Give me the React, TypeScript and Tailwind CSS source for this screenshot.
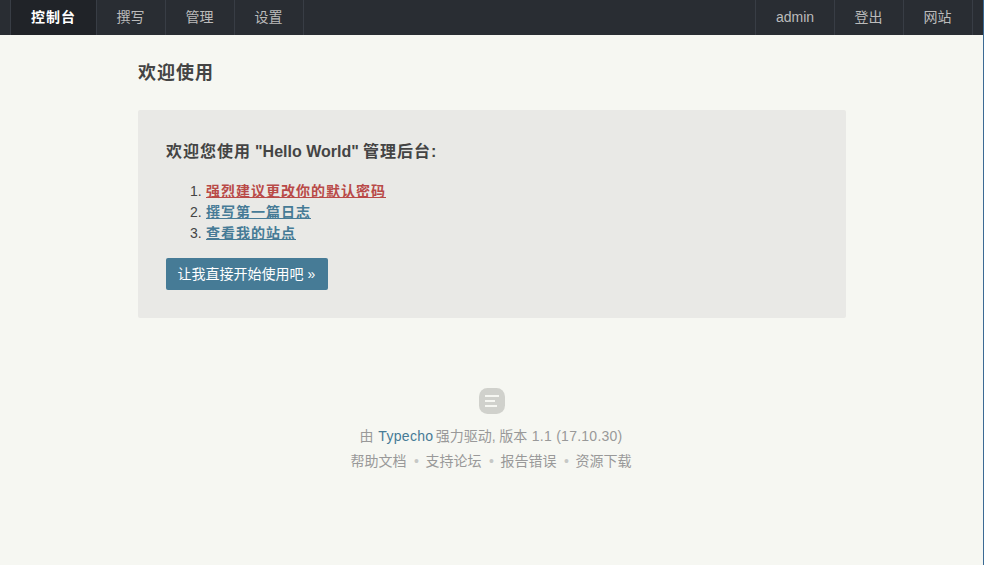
import React from "react";

const navLink = "flex h-[35px] items-center border-r border-[#383d45] text-[#bbb]";

const steps = [
  { label: "强烈建议更改你的默认密码", color: "text-[#b94a48]" },
  { label: "撰写第一篇日志", color: "text-[#467b96]" },
  { label: "查看我的站点", color: "text-[#467b96]" },
];

const resources = ["帮助文档", "支持论坛", "报告错误", "资源下载"];

function Logo() {
  return (
    <svg width="26" height="26" viewBox="0 0 26 26" className="ml-[2px] block">
      <rect width="26" height="26" rx="8.5" fill="#d0d1cc" />
      <path d="M6 7h14v2H6zM6 12h10v2H6zM6 17h12v2H6z" fill="#f6f7f2" />
    </svg>
  );
}

export default function App() {
  return (
    <div className="h-[565px] w-[984px] overflow-hidden border-r border-[#3b6a94] bg-[#f6f7f2] font-['Liberation_Sans','Noto_Sans_CJK_SC',sans-serif] text-[14px] leading-[21px] text-[#444]">
      <nav className="flex h-[35px] justify-between bg-[#292d33] px-[10px]">
        <div className="flex border-l border-[#383d45]">
          <a className="flex h-[35px] w-[86px] items-center border-r border-[#383d45] bg-[#202328] pl-5 font-bold tracking-[1px] text-white">
            <span>控制台</span>
          </a>
          {["撰写", "管理", "设置"].map((t) => (
            <a key={t} className={navLink + " w-[69px] pl-[19.5px]"}>
              <span>{t}</span>
            </a>
          ))}
        </div>
        <div className="flex border-l border-[#383d45]">
          <a className={navLink + " w-[79px] pl-5"}>
            <span>admin</span>
          </a>
          {["登出", "网站"].map((t) => (
            <a key={t} className={navLink + " w-[69px] pl-[19.5px]"}>
              <span>{t}</span>
            </a>
          ))}
        </div>
      </nav>

      <main className="ml-[138px] w-[708px] pt-[26px]">
        <h2 className="h-[49px] text-[18px] font-bold leading-[24px] tracking-[1px]">欢迎使用</h2>
        <section className="h-[208px] rounded-[2px] bg-[#e9e9e6] px-[28px] pt-[31px]">
          <h3 className="flex h-[40px] text-[16px] font-bold leading-[22px]">
            <span className="w-[89px] tracking-[1px]">欢迎您使用</span>
            <span className="w-[108px]">"Hello World"</span>
            <span className="tracking-[1px]">管理后台:</span>
          </h3>
          <ol>
            {steps.map((s, i) => (
              <li key={s.label} className="flex h-[21px]">
                <span className="w-[40px] pl-[24px]">{i + 1}.</span>
                <a className={"font-bold tracking-[1px] underline decoration-1 underline-offset-1 " + s.color}>
                  {s.label}
                </a>
              </li>
            ))}
          </ol>
          <button className="mt-[14px] flex h-[32px] w-[162px] items-center rounded-[2px] bg-[#467b96] pl-[11.5px] text-left text-white">
            <span>
              让我直接开始使用吧 <span>»</span>
            </span>
          </button>
        </section>
      </main>

      <footer className="mt-[70px] flex w-[982px] flex-col items-center text-[#999]">
        <Logo />
        <p className="mt-[12px] flex h-[21px] w-[263px] whitespace-nowrap">
          <span className="w-[18px]">由</span>
          <a className="w-[59px] pl-px tracking-[0.3px] text-[#467b96]">Typecho</a>
          <span className="w-[64px]">强力驱动,</span>
          <span className="w-[33px]">版本</span>
          <span className="tracking-[0.25px]">1.1 (17.10.30)</span>
        </p>
        <p className="mt-[4px] flex h-[21px]">
          {resources.map((r, i) => (
            <React.Fragment key={r}>
              {i > 0 && <span className="w-[19px] pl-px text-center text-[#c6c8c6]">•</span>}
              <a className="w-[56px]">{r}</a>
            </React.Fragment>
          ))}
        </p>
      </footer>
    </div>
  );
}
